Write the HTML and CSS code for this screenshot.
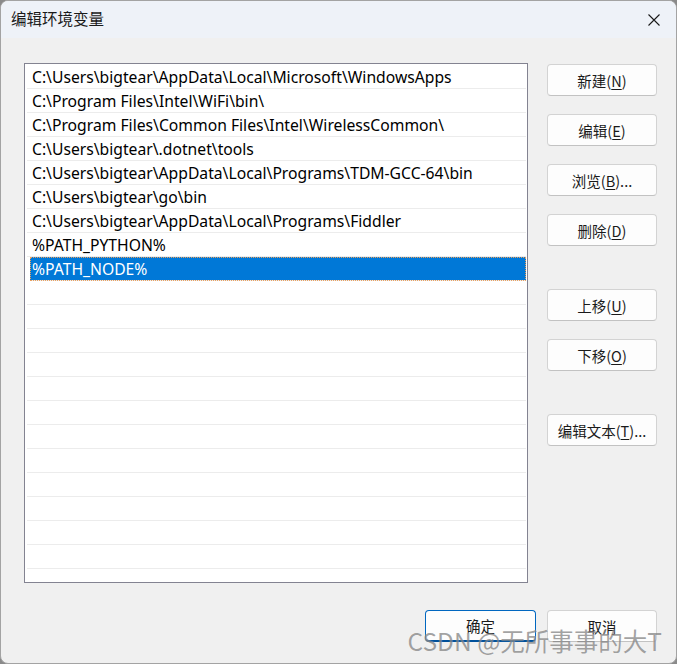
FILE: index.html
```html
<!DOCTYPE html>
<html lang="zh-CN">
<head>
<meta charset="utf-8">
<title>编辑环境变量</title>
<link rel="stylesheet" href="styles.css">
</head>
<body>
<div class="window">
  <div class="titlebar">
    <span class="title">编辑环境变量</span>
    <span class="close">
      <svg width="12" height="12" viewBox="0 0 12 12"><path d="M0.5 0.5 L11.5 11.5 M11.5 0.5 L0.5 11.5" stroke="#1a1a1a" stroke-width="1.1" fill="none"/></svg>
    </span>
  </div>
  <div class="content">
    <div class="main">
      <div class="list">
        <div class="row">C:\Users\bigtear\AppData\Local\Microsoft\WindowsApps</div>
        <div class="row">C:\Program Files\Intel\WiFi\bin\</div>
        <div class="row">C:\Program Files\Common Files\Intel\WirelessCommon\</div>
        <div class="row">C:\Users\bigtear\.dotnet\tools</div>
        <div class="row">C:\Users\bigtear\AppData\Local\Programs\TDM-GCC-64\bin</div>
        <div class="row">C:\Users\bigtear\go\bin</div>
        <div class="row">C:\Users\bigtear\AppData\Local\Programs\Fiddler</div>
        <div class="row">%PATH_PYTHON%</div>
        <div class="row selected">%PATH_NODE%</div>
        <div class="row"></div>
        <div class="row"></div>
        <div class="row"></div>
        <div class="row"></div>
        <div class="row"></div>
        <div class="row"></div>
        <div class="row"></div>
        <div class="row"></div>
        <div class="row"></div>
        <div class="row"></div>
        <div class="row"></div>
        <div class="row"></div>
        <div class="row last"></div>
      </div>
      <div class="side">
        <button class="btn">新建(<u>N</u>)</button>
        <button class="btn">编辑(<u>E</u>)</button>
        <button class="btn">浏览(<u>B</u>)...</button>
        <button class="btn">删除(<u>D</u>)</button>
        <button class="btn spaced">上移(<u>U</u>)</button>
        <button class="btn">下移(<u>O</u>)</button>
        <button class="btn spaced">编辑文本(<u>T</u>)...</button>
      </div>
    </div>
    <div class="footer">
      <button class="btn primary">确定</button>
      <button class="btn">取消</button>
    </div>
  </div>
  <div class="watermark">CSDN @无所事事的大T</div>
</div>
</body>
</html>
```
FILE: styles.css
```css
* { box-sizing: border-box; }
html, body {
  margin: 0;
  padding: 0;
  background: #8a8a8a;
}
body {
  width: 677px;
  height: 664px;
  overflow: hidden;
  font-family: "Noto Sans", "Noto Sans CJK SC", sans-serif;
}
.window {
  position: relative;
  width: 677px;
  height: 664px;
  border: 1px solid #a3a3a3;
  border-radius: 8px;
  background: #f0f0f0;
  overflow: hidden;
}
.titlebar {
  height: 37px;
  background: #eef2f8;
  display: flex;
  align-items: center;
  justify-content: space-between;
  padding: 0 0 0 10px;
}
.title {
  font-family: "Noto Sans CJK SC", sans-serif;
  font-size: 15.5px;
  color: #1a1a1a;
  line-height: 1;
  margin-top: -1px;
}
.close {
  width: 46px;
  height: 37px;
  display: flex;
  align-items: center;
  justify-content: center;
  margin-right: -1px;
}
.content {
  padding: 25px 19px 0 23px;
}
.main {
  display: flex;
  gap: 19px;
}
.list {
  width: 504px;
  height: 520px;
  border: 1px solid #838391;
  background: #ffffff;
  padding: 1px 1px 0 2px;
  overflow: hidden;
}
.row {
  height: 24px;
  border-bottom: 1px solid #ececec;
  padding-left: 5px;
  font-size: 15.7px;
  line-height: 24px;
  color: #000;
  white-space: nowrap;
}
.row.selected {
  background: #0078d7;
  color: #ffffff;
  outline: 1px dotted #e8a060;
  outline-offset: -1px;
  margin-left: 3px;
  padding-left: 2px;
}
.side {
  display: flex;
  flex-direction: column;
  gap: 18px;
  padding-top: 1px;
}
.btn {
  width: 110px;
  height: 32px;
  border: 1px solid #d3d3d3;
  border-bottom-color: #c2c2c2;
  border-radius: 4px;
  background: #fdfdfd;
  font-family: "Noto Sans CJK SC", sans-serif;
  font-size: 14.5px;
  color: #1a1a1a;
  padding: 0;
  margin: 0;
}
.btn u { text-underline-offset: 2px; }
.btn.spaced { margin-top: 25px; }
.footer {
  display: flex;
  justify-content: flex-end;
  gap: 11px;
  margin-top: 27px;
}
.btn.primary {
  width: 111px;
  border: 1px solid #0067c0;
  border-bottom: 2px solid #00509a;
}
.watermark {
  position: absolute;
  right: 14px;
  bottom: 8px;
  font-family: "Noto Sans CJK SC", sans-serif;
  font-size: 24.5px;
  line-height: 1.2;
  color: rgba(70, 70, 70, 0.5);
  text-shadow: 0 0 1px rgba(255, 255, 255, 0.6);
  pointer-events: none;
}
```
